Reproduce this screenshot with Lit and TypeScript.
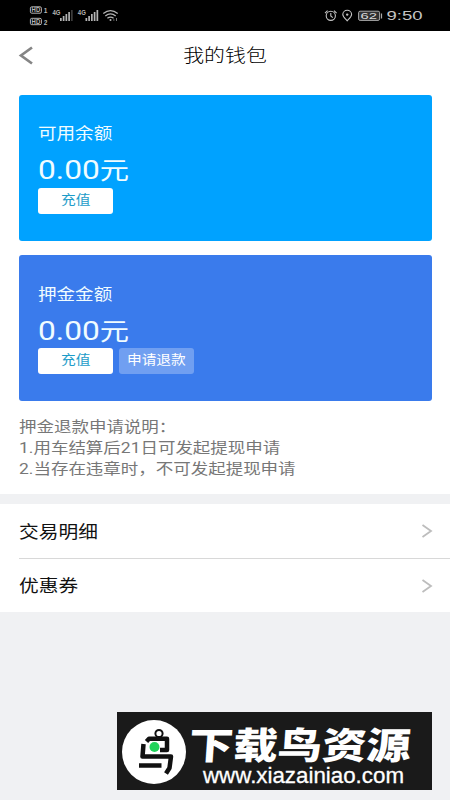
import { LitElement, html, css, svg } from "lit";
import { customElement, property } from "lit/decorators.js";

@customElement("status-bar")
class StatusBar extends LitElement {
  static styles = css`
    :host { display: block; height: 31px; background: #000; }
    svg { display: block; }
    text { font-family: "Liberation Sans", sans-serif; fill: #b4b4b4; }
    .tag { font-size: 6.5px; font-weight: bold; }
    .net { font-size: 6.5px; font-weight: bold; }
    .bat { font-size: 9px; fill: #d8d8d8; }
    .time { font-size: 12.5px; fill: #c4c4c4; }
  `;
  signal(x: number, last: string) {
    return [3, 5, 7, 9, 11].map(
      (h, i) => svg`<rect x=${x + i * 2.75} y=${21 - h} width="1.7" height=${h} fill=${i === 4 ? last : "#b4b4b4"} />`
    );
  }
  render() {
    return html`<svg width="450" height="31" viewBox="0 0 450 31" fill="none">
      ${[6.8, 18.3].map(
        (y, i) => svg`<rect x="30.4" y=${y} width="11" height="6.4" rx="1.4" stroke="#b4b4b4" stroke-width="1" />
        <text class="tag" x="31.6" y=${y + 5.5} textLength="8.6" lengthAdjust="spacingAndGlyphs">HD</text>
        <text class="net" x="43.8" y=${y + 6.3}>${i + 1}</text>`
      )}
      <text class="net" x="52.5" y="15" textLength="8" lengthAdjust="spacingAndGlyphs">4G</text>
      ${this.signal(60, "#3c3c3c")}
      <text class="net" x="77.8" y="15" textLength="8" lengthAdjust="spacingAndGlyphs">4G</text>
      ${this.signal(85.5, "#b4b4b4")}
      <g stroke="#b4b4b4" stroke-width="1.3">
        <path d="M103.3 13.6 Q110.5 7.6 117.7 13.6" />
        <path d="M105.3 16 Q110.5 11.8 115.7 16" />
        <path d="M107.4 18.3 Q110.5 15.9 113.6 18.3" />
      </g>
      <circle cx="110.5" cy="20" r="1" fill="#b4b4b4" />
      <path d="M113 20h1.5M116.5 18v3" stroke="#777" />
      <g stroke="#c4c4c4" stroke-width="1.1">
        <circle cx="330.8" cy="15.8" r="4.6" />
        <path d="M330.8 13v3l2 1.6M325 13.2l2.6-2.6M336.6 13.2l-2.6-2.6" />
        <path d="M347.2 20.8c-2-2.2-4.4-4-4.4-6.3a4.4 4.2 0 0 1 8.8 0c0 2.3-2.4 4.1-4.4 6.3z" />
      </g>
      <circle cx="347.2" cy="14.6" r="1.2" fill="#c4c4c4" />
      <rect x="358.6" y="11.2" width="21" height="9.2" rx="1.5" fill="#303030" stroke="#a8a8a8" />
      <path d="M381.5 13.5v5" stroke="#a8a8a8" stroke-width="1.2" />
      <text class="bat" x="360.5" y="19" textLength="16.5" lengthAdjust="spacingAndGlyphs">62</text>
      <text class="time" x="386.5" y="20" textLength="36" lengthAdjust="spacingAndGlyphs">9:50</text>
    </svg>`;
  }
}

@customElement("balance-card")
class BalanceCard extends LitElement {
  @property() label = "";
  @property() amount = "";
  @property({ type: Boolean }) refundable = false;
  static styles = css`
    :host { display: flex; flex-direction: column; align-items: flex-start; box-sizing: border-box; height: 145.5px; padding: 27px 19px 0; border-radius: 3px; background: #00a2ff; color: #f0fcff; }
    :host([refundable]) { background: #3a7bec; padding-top: 27.5px; }
    .wide { display: inline-block; white-space: nowrap; transform: scaleX(1.16); }
    .label, .amount { transform-origin: left; }
    .label { font-size: 16px; line-height: 24px; }
    .amount { font-size: 26px; line-height: 32px; height: 32px; margin-top: 8px; transform: scaleX(1.22); }
    .unit { font-size: 24px; }
    .buttons { display: flex; gap: 6px; margin-top: 1.5px; }
    .btn { width: 75px; height: 26px; border-radius: 3px; background: #fff; color: #1d9cc9; font-size: 12.7px; line-height: 24px; text-align: center; }
    .ghost { background: rgba(255, 255, 255, 0.28); color: #fff; }
  `;
  render() {
    return html`
      <span class="wide label">${this.label}</span>
      <span class="wide amount">${this.amount}<span class="unit">元</span></span>
      <div class="buttons">
        <div class="btn"><span class="wide">充值</span></div>
        ${this.refundable ? html`<div class="btn ghost"><span class="wide">申请退款</span></div>` : ""}
      </div>`;
  }
}

@customElement("site-badge")
class SiteBadge extends LitElement {
  static styles = css`
    :host { display: flex; align-items: center; box-sizing: border-box; width: 315px; height: 78px; padding-left: 5px; background: #1a1a1a; color: #fff; }
    svg { display: block; }
    .name { font: 900 37px "Noto Sans CJK SC", sans-serif; }
    .url { font: 22.2px "Liberation Sans", sans-serif; stroke: #fff; stroke-width: 0.3; }
    text { fill: #fff; }
  `;
  render() {
    return html`<svg width="310" height="78" viewBox="0 0 310 78" fill="none">
      <circle cx="32" cy="40" r="32" fill="#fff" />
      <g stroke="#111" stroke-linejoin="round">
        <circle cx="37" cy="21.5" r="3.6" stroke-width="2" />
        <path stroke-width="4.5" d="M24.5 29.5 L27 26.8 H45 V38 H38" />
        <path stroke-width="4.5" d="M21.5 32 L20.5 44.5 H49 L47.5 56 L44 61.5" />
        <path stroke-width="4.5" d="M17 53.5 H39.5" />
      </g>
      <circle cx="32.5" cy="35" r="5" fill="#20d35a" />
      <text class="name" transform="translate(66 46.5) skewX(-4)" textLength="222" lengthAdjust="spacingAndGlyphs">下载鸟资源</text>
      <text class="url" x="81" y="71" textLength="201" lengthAdjust="spacingAndGlyphs">www.xiazainiao.com</text>
    </svg>`;
  }
}

@customElement("app-root")
class AppRoot extends LitElement {
  static styles = css`
    :host { display: block; position: relative; height: 800px; overflow: hidden; background: #f0f1f3; font-family: Roboto, "Noto Sans CJK SC", sans-serif; }
    .top { background: #fff; height: 463px; }
    header { display: grid; grid-template-columns: 60px 1fr 60px; align-items: center; height: 50px; }
    header svg { margin-left: 18px; }
    .title { text-align: center; font-size: 18px; font-weight: 300; line-height: 26px; color: #000; }
    .wide { display: inline-block; white-space: nowrap; transform: scaleX(1.16); }
    .cards { display: flex; flex-direction: column; gap: 14.5px; padding: 14px 18px 0 19px; }
    .notes { padding: 16.5px 19px 0; font-size: 15px; line-height: 21.2px; color: #777; }
    .notes .wide { display: block; transform-origin: left; transform: scaleX(1.165); }
    .menu { margin-top: 10px; background: #fff; }
    .row { display: flex; align-items: center; justify-content: space-between; height: 54px; margin-left: 19px; padding-right: 17px; font-size: 17px; color: #111; }
    .row .wide { transform-origin: left; line-height: 24px; padding-top: 1px; }
    .row + .row { border-top: 1px solid #d8d8d8; height: 53px; }
    site-badge { position: absolute; left: 117px; top: 712px; }
  `;
  render() {
    return html`
      <status-bar></status-bar>
      <div class="top">
        <header>
          <svg width="16" height="20" viewBox="0 0 16 20" fill="none" stroke="#858585" stroke-width="2.7"><path d="M14 1.5 L3 9.5 L14 17.5" /></svg>
          <div class="title"><span class="wide">我的钱包</span></div>
        </header>
        <div class="cards">
          <balance-card label="可用余额" amount="0.00"></balance-card>
          <balance-card label="押金金额" amount="0.00" refundable></balance-card>
        </div>
        <div class="notes">
          ${["押金退款申请说明：", "1.用车结算后21日可发起提现申请", "2.当存在违章时，不可发起提现申请"].map(
            (t) => html`<span class="wide">${t}</span>`
          )}
        </div>
      </div>
      <div class="menu">
        ${["交易明细", "优惠券"].map(
          (t) => html`<div class="row"><span class="wide">${t}</span>
            <svg width="12" height="16" viewBox="0 0 12 16" fill="none" stroke="#bdbdbd" stroke-width="1.8"><path d="M1.5 2 L10 8 L1.5 14" /></svg></div>`
        )}
      </div>
      <site-badge></site-badge>`;
  }
}
